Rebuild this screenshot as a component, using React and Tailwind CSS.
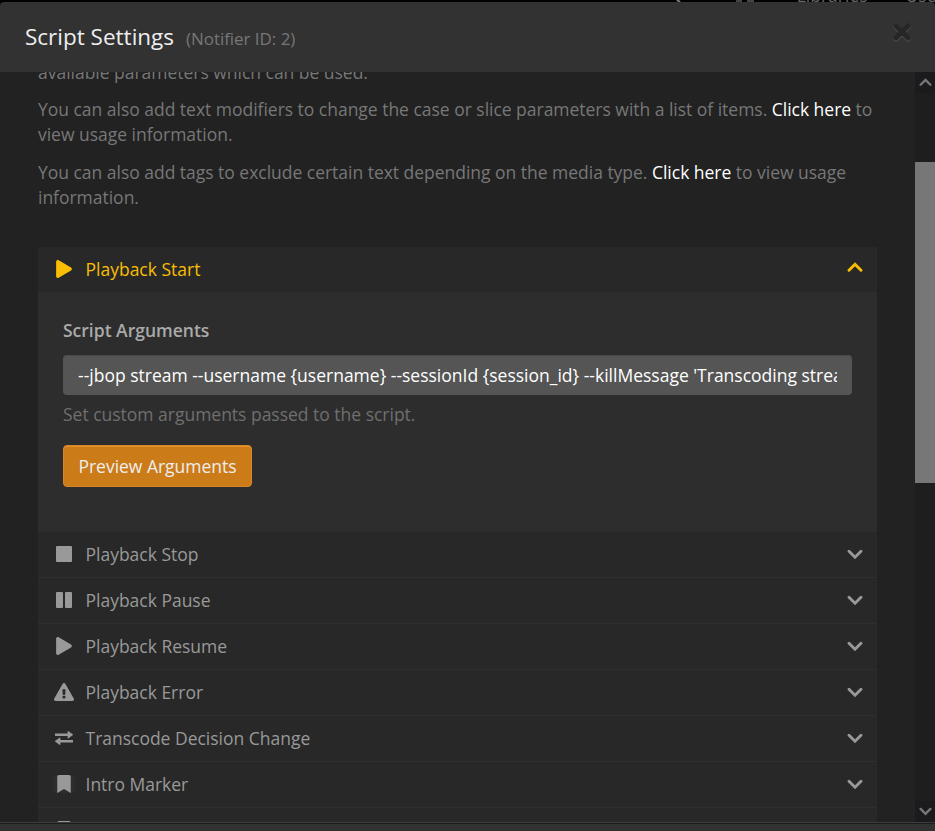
import React from "react";
import { FaPlay, FaExclamationTriangle, FaBookmark } from "react-icons/fa";

function Chevron({ up, className }) {
  return (
    <svg viewBox="0 0 16 11" className={className} fill="none" stroke="currentColor" strokeWidth="2.9" strokeLinecap="round" strokeLinejoin="miter">
      {up ? <path d="M2 8.3 8 2.3l6 6" /> : <path d="m2 2.3 6 6 6-6" />}
    </svg>
  );
}

function Exchange() {
  return (
    <svg viewBox="0 0 18 14" className="h-[14px] w-[18px]" fill="currentColor">
      <path d="M0 2.6h12.6V.8q0-1.1.9-.5l4.2 3q.6.5 0 1l-4.2 3q-.9.5-.9-.5V5H0zM18 9H5.4V7.2q0-1-.9-.5L.3 9.7q-.6.5 0 1l4.2 3q.9.6.9-.5v-1.8H18z" />
    </svg>
  );
}

function Stop() {
  return <svg viewBox="0 0 16 16" className="size-4" fill="currentColor"><rect width="16" height="16" rx="1" /></svg>;
}

function Pause() {
  return (
    <svg viewBox="0 0 16 16" className="size-4" fill="currentColor">
      <rect width="7" height="16" rx="1" /><rect x="9" width="7" height="16" rx="1" />
    </svg>
  );
}

const rows = [
  ["Playback Stop", <Stop />],
  ["Playback Pause", <Pause />],
  ["Playback Resume", <FaPlay size={18} />],
  ["Playback Error", <FaExclamationTriangle size={18} className="w-5" />],
  ["Transcode Decision Change", <Exchange />],
  ["Intro Marker", <span className="flex w-[22px] justify-center bg-[#2d2d2d]"><FaBookmark size={18} /></span>],
  ["Credits Marker", <FaBookmark size={18} />],
];

function Row({ label, icon }) {
  return (
    <li className="flex h-[46px] shrink-0 items-center border-b border-[#2f2f2f] pr-[14px] pl-[15px]">
      <span className="mb-[2px] flex w-[22px] justify-center">{icon}</span>
      <span className="ml-[10.5px] grow tracking-[-0.01px]">{label}</span>
      <Chevron className="h-[11px] w-4" />
    </li>
  );
}

export default function App() {
  return (
    <div className="flex h-[831px] w-[935px] flex-col overflow-hidden bg-black font-['Open_Sans',sans-serif] text-[17.5px] leading-[25px] text-[#777]">
      <div className="flex h-[2px] shrink-0 items-end justify-end overflow-hidden text-[17.5px] text-[#666]">
        <span className="mr-[56px] h-[2px] w-[3px] skew-x-[40deg] bg-[#777]" />
        <span className="mr-[5px] h-[2px] w-[6px] bg-[#444]" />
        <span className="mr-[43px] h-[2px] w-[7px] bg-[#444]" />
        <span className="-mb-[6px] mr-[38px]">Libraries</span>
        <span className="-mb-[6px] -mr-[17px]">Users</span>
      </div>
      <header className="flex h-[70px] shrink-0 items-center rounded-t-[4px] bg-[#323232] pr-[23px] pb-[2px] pl-[25px]">
        <h3 className="text-[22.5px] text-[#eee]">Script Settings</h3>
        <small className="mt-[5px] ml-[12px] grow text-[17px] tracking-[-0.05px]">(Notifier ID: 2)</small>
        <svg viewBox="0 0 20 20" className="mb-[9px] size-5" fill="none" strokeWidth="5" strokeLinecap="round">
          <path d="m4 5 12 12M16 5 4 17" stroke="#555" />
          <path d="m4 4 12 12M16 4 4 16" stroke="#262626" />
        </svg>
      </header>
      <div className="flex h-[750px] shrink-0 overflow-hidden bg-[#222]">
        <main className="flex w-[915px] shrink-0 flex-col px-[38px]">
          <div className="-mt-[12px] flex shrink-0 flex-col gap-[13px] tracking-[-0.02px]">
            <p className="-mb-px">available parameters which can be used.</p>
            <p>You can also add text modifiers to change the case or slice parameters with a list of items. <a className="text-white">Click here</a> to<br />view usage information.</p>
            <p>You can also add tags to exclude certain text depending on the media type. <a className="text-white">Click here</a> to view usage<br />information.</p>
          </div>
          <ul className="mt-[37px] flex shrink-0 flex-col bg-[#282828] text-[#999]">
            <li className="flex flex-col">
              <div className="flex h-[45px] items-center pr-[14px] pl-[15px] text-[#f9be03]">
                <span className="mb-[2px] flex w-[22px] justify-center"><FaPlay size={18} /></span>
                <span className="ml-[10.5px] grow">Playback Start</span>
                <Chevron up className="mb-1 h-[11px] w-4" />
              </div>
              <div className="flex h-[240px] flex-col items-start bg-[#2d2d2d] px-[25px] pt-[26px]">
                <label className="font-semibold text-[#aaa]">Script Arguments</label>
                <div className="mt-3 flex h-[40px] w-full items-center rounded-[4px] bg-[#555] px-[15px] text-white shadow-[inset_0_1px_1px_#4b4b4b]">
                  <span className="overflow-hidden whitespace-nowrap">--jbop stream --username {"{username}"} --sessionId {"{session_id}"} --killMessage 'Transcoding stream</span>
                </div>
                <p className="mt-[7px] tracking-[-0.01px] text-[#6f6f6f]">Set custom arguments passed to the script.</p>
                <button className="mt-[18px] flex h-[42px] w-[189px] items-center justify-center rounded-[4px] border border-[#d8862a] bg-[#cc7b19] text-[#eee] tracking-[-0.02px] shadow-[inset_0_1px_0_#e59029]">Preview Arguments</button>
              </div>
            </li>
            {rows.map(([label, icon]) => <Row key={label} label={label} icon={icon} />)}
          </ul>
        </main>
        <aside className="flex w-5 shrink-0 flex-col items-center bg-[#1e1e1e] text-[#777]">
          <div className="flex h-[21px] w-full items-center justify-center bg-[#1b1b1d] pb-px pl-px"><Chevron up className="h-[9px] w-[13px]" /></div>
          <div className="mt-[69px] h-[321px] w-full bg-[#777]" />
          <div className="mt-auto flex h-[21px] w-full items-center justify-center bg-[#1b1b1d] pl-px"><Chevron className="h-[9px] w-[13px]" /></div>
        </aside>
      </div>
      <footer className="h-[9px] shrink-0 border-t border-[#3c3c3c] bg-[#323232] shadow-[inset_0_1px_0_#1c1c1c]" />
    </div>
  );
}
